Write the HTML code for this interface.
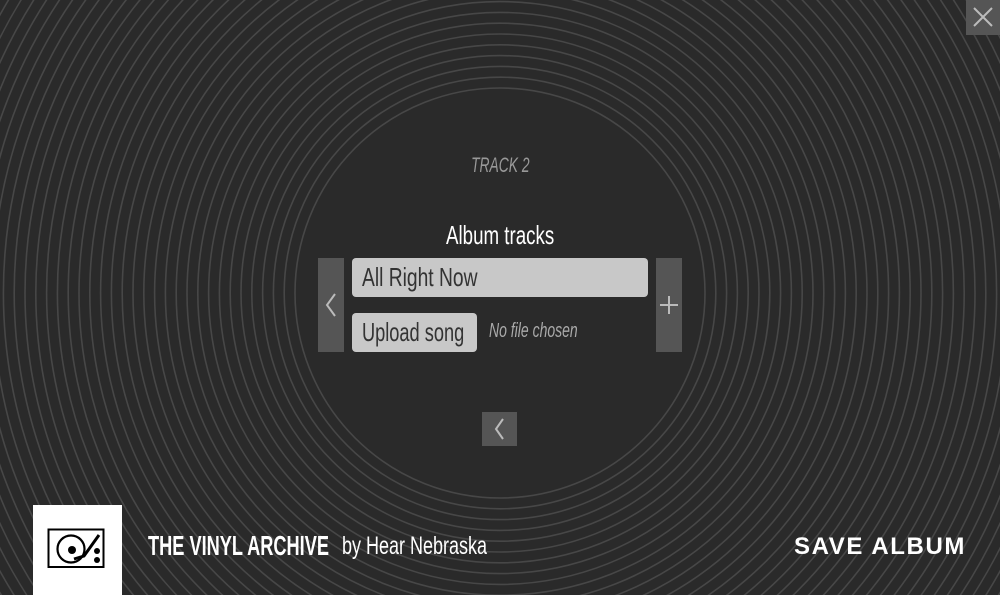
<!DOCTYPE html>
<html><head><meta charset="utf-8"><style>
*{margin:0;padding:0;box-sizing:border-box}
html,body{overflow:hidden}
body{width:1000px;height:595px;background:#2a2a2a;position:relative;font-family:"Liberation Sans",sans-serif}
svg{display:block}
svg.bg{position:absolute;left:0;top:0}
.a{position:absolute;white-space:nowrap}
.n{display:inline-block;transform:scaleX(0.74);transform-origin:left center;white-space:nowrap}
.c{display:inline-block;transform:scaleX(0.72);transform-origin:center center;white-space:nowrap}
.btn{background:#555;position:absolute}
</style></head><body>
<svg class="bg" width="1000" height="595" viewBox="0 0 1000 595">
<g fill="none" stroke="#474747" stroke-width="1.6" id="g"></g>
</svg>
<script>
var g=document.getElementById('g'),s='';
for(var r=205;r<720;r+=10.8){s+='<circle cx="500" cy="293" r="'+r.toFixed(1)+'"/>';}
g.innerHTML=s;
</script>
<div class="btn" style="left:966px;top:0;width:34px;height:35px">
<svg width="34" height="35"><path d="M8 8 L26 26 M26 8 L8 26" stroke="#bbb" stroke-width="2"/></svg></div>
<div class="a" style="left:0;width:1000px;top:154px;text-align:center;color:#999;font-style:italic;font-size:21px"><span class="c" style="transform:scaleX(0.66)">TRACK 2</span></div>
<div class="a" style="left:0;width:1000px;top:220px;text-align:center;color:#fff;font-size:26px"><span class="c">Album tracks</span></div>
<div class="btn" style="left:318px;top:258px;width:26px;height:94px">
<svg width="26" height="94"><path d="M17 36 L9 47 L17 58" fill="none" stroke="#bbb" stroke-width="2"/></svg></div>
<div class="a" style="left:352px;top:258px;width:296px;height:39px;background:#c8c8c8;border-radius:4px;color:#333;font-size:26px;line-height:39px;padding-left:10px"><span class="n">All Right Now</span></div>
<div class="a" style="left:352px;top:313px;width:125px;height:39px;background:#c8c8c8;border-radius:4px;color:#333;font-size:26px;line-height:39px;padding-left:10px"><span class="n" style="transform:scaleX(0.7)">Upload song</span></div>
<div class="a" style="left:489px;top:320px;color:#aaa;font-style:italic;font-size:20px"><span class="n" style="transform:scaleX(0.7)">No file chosen</span></div>
<div class="btn" style="left:656px;top:258px;width:26px;height:94px">
<svg width="26" height="94"><path d="M13 38 V56 M4 47 H22" stroke="#bbb" stroke-width="2"/></svg></div>
<div class="btn" style="left:482px;top:412px;width:35px;height:34px">
<svg width="35" height="34"><path d="M21 7 L14 17 L21 27" fill="none" stroke="#bbb" stroke-width="2"/></svg></div>
<div class="a" style="left:33px;top:505px;width:89px;height:90px;background:#fff;overflow:hidden">
<svg width="89" height="90" viewBox="33 505 89 90">
<rect x="48.5" y="529.5" width="55" height="37.5" fill="none" stroke="#000" stroke-width="2"/>
<circle cx="71" cy="549" r="13.5" fill="none" stroke="#000" stroke-width="2.2"/>
<circle cx="72" cy="550" r="4" fill="#000"/>
<path d="M99 535 L84 556 L74 559" fill="none" stroke="#000" stroke-width="3"/>
<circle cx="97" cy="551" r="3" fill="#000"/><circle cx="97" cy="560" r="3" fill="#000"/>
</svg></div>
<div class="a" style="left:148px;top:530px;color:#fff;font-weight:bold;font-size:28px"><span class="n" style="transform:scaleX(0.65)">THE VINYL ARCHIVE</span></div>
<div class="a" style="left:342px;top:532px;color:#fff;font-size:25px"><span class="n" style="transform:scaleX(0.72)">by Hear Nebraska</span></div>
<div class="a" style="left:794px;top:533px;color:#fff;font-weight:bold;font-size:24px;letter-spacing:1.6px">SAVE ALBUM</div>
</body></html>
